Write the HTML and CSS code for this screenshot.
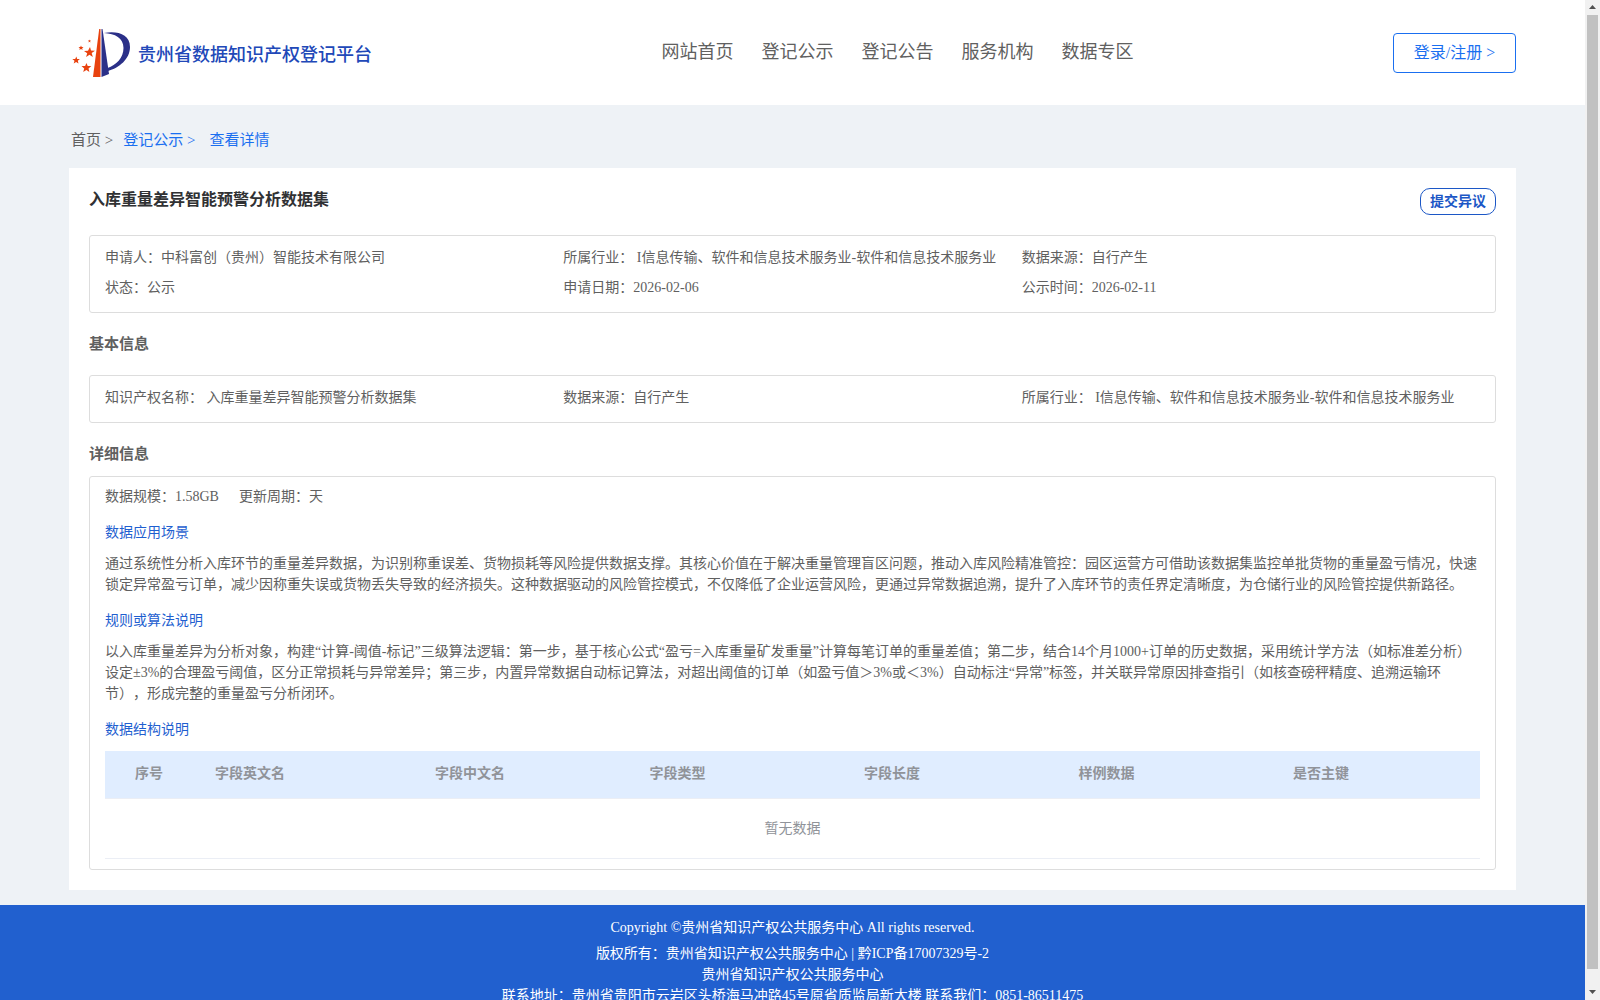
FILE: index.html
```html
<!DOCTYPE html>
<html lang="zh-CN">
<head>
<meta charset="utf-8">
<title>贵州省数据知识产权登记平台</title>
<link rel="stylesheet" href="styles.css">
</head>
<body>
<div class="shell">
  <div class="page">
    <header class="header">
      <a class="brand" href="#">
        <svg class="logo" viewBox="0 0 58 50" aria-hidden="true">
          <path fill="#e8420f" d="M27.200 1h1.300v48H21z"/>
          <path fill="#2b3088" d="M29.500 1h1L37 46l-7.500 3z"/>
          <path fill="#2b3088" d="M32 5c13-2.500 26 1 26 14 0 12-11 21-22 24l-.4-3C44 37 51.500 30 51.500 20 51.500 10 43 5.500 32 5z"/>
          <g fill="#e8420f">
            <path d="M18 19l1 3.600 4 .2-3.300 2.300 1.100 4-3.300-2.300-3.400 2.300 1.100-3.900-3.200-2.300 4-.2z"/>
            <path d="M14.500 35l1.200 3 3.600.1-2.800 2.300.9 3.600-3-2-3.200 2 1-3.600-2.700-2.300 3.600-.2z"/>
            <path d="M4.300 28.500l.9 2.400 2.700.2-2.100 1.700.7 2.700-2.400-1.500-2.400 1.500.8-2.700-2.200-1.700 2.900-.2z"/>
            <path d="M9 17.500l.7 1.500 1.800.1-1.300 1.200.4 1.700-1.600-.9-1.600.9.400-1.700-1.300-1.200 1.800-.1z"/>
            <path d="M17.500 11.500l.4 1 1.100.1-.8.700.2 1.100-.9-.6-1 .6.300-1.100-.9-.7 1.200-.1z"/>
          </g>
        </svg>
        <span class="brand-name">贵州省数据知识产权登记平台</span>
      </a>
      <nav class="nav">
        <a href="#">网站首页</a>
        <a href="#">登记公示</a>
        <a href="#">登记公告</a>
        <a href="#">服务机构</a>
        <a href="#">数据专区</a>
      </nav>
      <button class="login" type="button">登录/注册 &gt;</button>
    </header>

    <main class="main">
      <nav class="crumbs">
        <a class="crumb-home" href="#">首页 &gt;</a>
        <a href="#">登记公示 &gt;</a>
        <a class="crumb-current" href="#">查看详情</a>
      </nav>

      <article class="card">
        <div class="card-head">
          <h1>入库重量差异智能预警分析数据集</h1>
          <button class="objection" type="button">提交异议</button>
        </div>

        <section class="box facts">
          <p>申请人：中科富创（贵州）智能技术有限公司</p>
          <p>所属行业： I信息传输、软件和信息技术服务业-软件和信息技术服务业</p>
          <p>数据来源：自行产生</p>
          <p>状态：公示</p>
          <p>申请日期：2026-02-06</p>
          <p>公示时间：2026-02-11</p>
        </section>

        <h2>基本信息</h2>
        <section class="box facts">
          <p>知识产权名称： 入库重量差异智能预警分析数据集</p>
          <p>数据来源：自行产生</p>
          <p>所属行业： I信息传输、软件和信息技术服务业-软件和信息技术服务业</p>
        </section>

        <h2 class="tight">详细信息</h2>
        <section class="box details">
          <div class="scale"><span>数据规模：1.58GB</span><span>更新周期：天</span></div>
          <h3>数据应用场景</h3>
          <p>通过系统性分析入库环节的重量差异数据，为识别称重误差、货物损耗等风险提供数据支撑。其核心价值在于解决重量管理盲区问题，推动入库风险精准管控：园区运营方可借助该数据集监控单批货物的重量盈亏情况，快速锁定异常盈亏订单，减少因称重失误或货物丢失导致的经济损失。这种数据驱动的风险管控模式，不仅降低了企业运营风险，更通过异常数据追溯，提升了入库环节的责任界定清晰度，为仓储行业的风险管控提供新路径。</p>
          <h3>规则或算法说明</h3>
          <p>以入库重量差异为分析对象，构建“计算-阈值-标记”三级算法逻辑：第一步，基于核心公式“盈亏=入库重量矿发重量”计算每笔订单的重量差值；第二步，结合14个月1000+订单的历史数据，采用统计学方法（如标准差分析）设定±3%的合理盈亏阈值，区分正常损耗与异常差异；第三步，内置异常数据自动标记算法，对超出阈值的订单（如盈亏值＞3%或＜3%）自动标注“异常”标签，并关联异常原因排查指引（如核查磅秤精度、追溯运输环节），形成完整的重量盈亏分析闭环。</p>
          <h3>数据结构说明</h3>
          <table class="fields">
            <thead>
              <tr><th class="col-index">序号</th><th class="col-first">字段英文名</th><th>字段中文名</th><th>字段类型</th><th>字段长度</th><th>样例数据</th><th class="col-last">是否主键</th></tr>
            </thead>
            <tbody>
              <tr><td colspan="7">暂无数据</td></tr>
            </tbody>
          </table>
        </section>
      </article>
    </main>

    <footer class="footer">
      <p class="copyright">Copyright ©贵州省知识产权公共服务中心 All rights reserved.</p>
      <p>版权所有：贵州省知识产权公共服务中心 | 黔ICP备17007329号-2</p>
      <p>贵州省知识产权公共服务中心</p>
      <p>联系地址：贵州省贵阳市云岩区头桥海马冲路45号原省质监局新大楼 联系我们：0851-86511475</p>
    </footer>
  </div>
  <div class="scrollbar" aria-hidden="true">
    <svg viewBox="0 0 15 15"><path fill="#505050" d="M4 9h7L7.500 5z"/></svg>
    <div class="thumb"></div>
    <svg viewBox="0 0 15 15"><path fill="#505050" d="M4 5h7L7.500 9z"/></svg>
  </div>
</div>
</body>
</html>
```
FILE: styles.css
```css
* { box-sizing: border-box; }

body {
  margin: 0;
  background: #eef2f6;
  color: #606060;
  font: 14px/21px "Liberation Serif", "Noto Sans CJK SC", serif;
  text-spacing-trim: space-all;
}

h1, h2, h3, p { margin: 0; }
a { color: inherit; text-decoration: none; }
button { background: #fff; font-family: inherit; padding: 0; cursor: pointer; }

.shell {
  display: grid;
  grid-template-columns: minmax(0, 1fr) 15px;
  height: 100vh;
  overflow: hidden;
}
.page { overflow: hidden; }

.header {
  display: grid;
  grid-template-columns: 1fr auto 1fr;
  align-items: center;
  height: 105px;
  padding: 0 69px;
  background: #fff;
}
.brand {
  display: flex;
  align-items: center;
  gap: 8px;
  padding-left: 3px;
  color: #2148b8;
  font-size: 18px;
  font-weight: 500;
}
.brand-name { padding-top: 5px; }
.logo { width: 58px; height: 50px; }
.nav {
  display: flex;
  gap: 28px;
  padding-left: 210px;
  font-size: 18px;
}
.login {
  justify-self: end;
  width: 123px;
  height: 40px;
  padding-bottom: 3px;
  border: 1px solid #1a6ff0;
  border-radius: 4px;
  color: #1a6ff0;
  font-size: 16px;
}

.main { padding: 0 69px 15px; }
.crumbs {
  display: flex;
  align-items: center;
  gap: 10px;
  height: 63px;
  padding: 8px 0 0 2px;
  color: #1a6ff0;
  font-size: 15px;
}
.crumb-home { color: #606060; }
.crumb-current { padding-left: 4px; }

.card { padding: 20px; background: #fff; }
.card-head {
  display: flex;
  justify-content: space-between;
  height: 47px;
}
h1 { color: #303133; font-size: 16px; line-height: 24px; }
.objection {
  width: 76px;
  height: 27px;
  padding-bottom: 4px;
  border: 1px solid #1c57c6;
  border-radius: 10px;
  color: #1c57c6;
  font-size: 14px;
  font-weight: 700;
}

.box { border: 1px solid #ddd; border-radius: 3px; padding: 7px 15px 9px; }
.facts {
  display: grid;
  grid-template-columns: repeat(3, 1fr);
  line-height: 30px;
  white-space: nowrap;
}
h2 { padding: 20px 0; font-size: 15px; line-height: 22px; }
.tight { padding-bottom: 11px; }

.details { padding: 9px 15px 10px; }
.scale { display: flex; gap: 20px; }
h3 {
  padding: 15px 0 10px;
  color: #1f5fd0;
  font-size: 14px;
  font-weight: 400;
  line-height: 21px;
}

.fields {
  width: 100%;
  margin-top: 1px;
  border-collapse: collapse;
  table-layout: fixed;
  color: #909399;
}
.fields th {
  width: 15.6%;
  height: 47px;
  padding: 0 0 2px 22px;
  background: #e0edff;
  border-bottom: 1px solid #ebeef5;
  text-align: left;
}
.fields .col-index { width: 6.4%; padding-left: 0; text-align: center; }
.fields .col-first { width: 16%; }
.fields .col-last { width: auto; }
.fields td {
  height: 60px;
  padding: 0;
  border-bottom: 1px solid #ebeef5;
  text-align: center;
}

.footer {
  padding: 12px 20px 20px;
  background: #2160cf;
  color: #fff;
  text-align: center;
}
.copyright { padding-bottom: 5px; }

.scrollbar {
  display: flex;
  flex-direction: column;
  background: #f1f1f1;
}
.scrollbar svg { width: 15px; height: 15px; }
.thumb { flex: 1; margin: 0 2px 16px; background: #c1c1c1; }
```
